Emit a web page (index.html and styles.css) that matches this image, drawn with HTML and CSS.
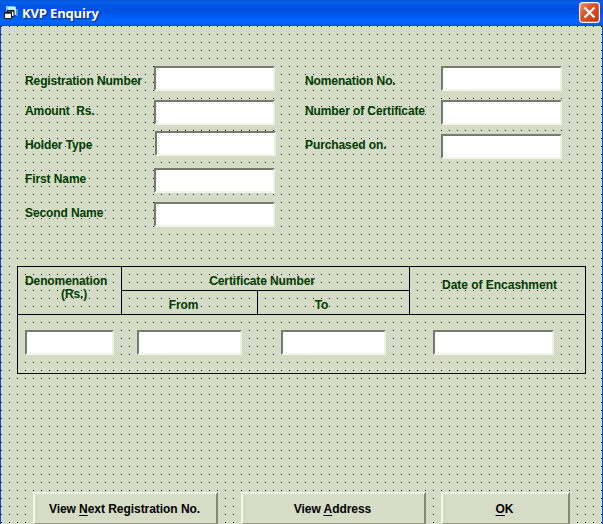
FILE: index.html
```html
<!DOCTYPE html>
<html lang="en">
<head>
<meta charset="utf-8">
<title>KVP Enquiry</title>
<link rel="stylesheet" href="styles.css">
</head>
<body>
<div class="window">
  <header class="titlebar">
    <svg class="app-icon" width="16" height="16" viewBox="0 0 16 16">
      <path d="M3 1h9v8H3z" fill="#83c8f2"/>
      <path d="M5 2h8v8H5z" fill="#c3ebff"/>
      <path d="M13 4h2v7h-2z" fill="#4c91d9"/>
      <path d="M4 5.500h7v6H4z" fill="#fff" stroke="#101820"/>
      <path d="M1.500 7.500h7v6h-7z" fill="#fff" stroke="#101820"/>
      <path d="M1 8h8M4 6h7" stroke="#101820" stroke-width="1.400"/>
    </svg>
    <h1 class="title">KVP Enquiry</h1>
    <button class="close" aria-label="Close">
      <svg width="21" height="21" viewBox="0 0 21 21">
        <defs><linearGradient id="red" x1="0" y1="0" x2="1" y2="1"><stop offset="0" stop-color="#ef9475"/><stop offset=".4" stop-color="#df522b"/><stop offset="1" stop-color="#be3510"/></linearGradient></defs>
        <rect x=".6" y=".6" width="19.8" height="19.8" rx="2.8" fill="url(#red)" stroke="#f3f3fb" stroke-width="1.2"/>
        <path d="M5.500 5.500l10 10M15.500 5.500l-10 10" stroke="#fff" stroke-width="2.2"/>
      </svg>
    </button>
  </header>
  <main class="form">
    <section class="fields">
      <div class="column">
        <div class="row first"><label>Registration Number</label><input class="wide"></div>
        <div class="row"><label>Amount &nbsp;Rs.</label><input class="wide"></div>
        <div class="row"><label>Holder Type</label><input class="wide raised"></div>
        <div class="row"><label>First Name</label><input class="wide"></div>
        <div class="row"><label>Second Name</label><input class="wide"></div>
      </div>
      <div class="column second">
        <div class="row first"><label>Nomenation No.</label><input class="wide"></div>
        <div class="row"><label>Number of Certificate</label><input class="wide"></div>
        <div class="row"><label>Purchased on.</label><input class="wide"></div>
      </div>
    </section>
    <section class="table">
      <div class="head">
        <div class="cell denom"><span>Denomenation</span><span class="rs">(Rs.)</span></div>
        <div class="cell cert"><span>Certificate Number</span></div>
        <div class="cell from"><span>From</span></div>
        <div class="cell to"><span>To</span></div>
        <div class="cell date"><span>Date of Encashment</span></div>
      </div>
      <div class="entry">
        <input class="in-denom"><input class="in-from"><input class="in-to"><input class="in-date">
      </div>
    </section>
    <footer class="actions">
      <button class="next"><span>View <u>N</u>ext Registration No.</span></button>
      <button class="address"><span>View <u>A</u>ddress</span></button>
      <button class="ok"><span><u>O</u>K</span></button>
    </footer>
  </main>
</div>
</body>
</html>
```
FILE: styles.css
```css
* { box-sizing: border-box; }
body { margin: 0; overflow: hidden; font: bold 12px/14px "Liberation Sans", Arial, sans-serif; letter-spacing: -.1px; }
.window { width: 603px; height: 524px; display: flex; flex-direction: column; background: #0848d8; }
.titlebar {
  height: 26px; flex: none; display: flex; align-items: center; padding: 0 3px;
  background: linear-gradient(#0a50cf 0, #0562ee 2px, #0054e3 5px, #0053e1 11px, #005cf4 17px, #0066ff 22px, #0262f4 24px, #0048d5 26px);
}
.app-icon { margin-top: -1px; }
.title { margin: 0 auto 0 3px; font: bold 13px/20px "Open Sans", sans-serif; letter-spacing: -.15px; color: #fff; text-shadow: 1px 1px 1px #0a2a80; }
.close { width: 21px; height: 21px; margin-top: -1px; padding: 0; border: 0; background: none; }
.close svg { display: block; }
/* design grid: one dot every 8px over a fine dither */
.form {
  flex: 1; margin: 0 1px; display: flex; flex-direction: column;
  background-image: conic-gradient(from 270deg at 1px 1px, #080c04 25%, transparent 0), conic-gradient(#d0d8c1 25%, #d9dfca 0 50%, #d0d8c1 0 75%, #d9dfca 0);
  background-size: 8px 8px, 2px 2px;
}
.fields { display: flex; height: 200px; padding: 40px 0 0 24px; color: #003c00; }
.column { width: 250px; display: flex; flex-direction: column; gap: 9px; }
.second { margin-left: 30px; width: 257px; }
.row { display: flex; flex: none; justify-content: space-between; height: 25px; }
.row label { margin-top: 4px; white-space: pre; }
.row.first label { margin-top: 8px; }
input { height: 25px; padding: 0; border: 2px solid; border-color: #76796d #eff1df #f4f6e8 #76796d; border-radius: 0; background: #fff; outline: 0; }
.wide { width: 121px; }
.raised { margin: -3px -1px 0 0; }
.table { width: 569px; height: 108px; margin: 40px 0 0 16px; border: 1px solid #000; color: #003c00; }
.head { display: grid; grid-template-columns: 104px 136px 152px 175px; grid-template-rows: 24px 23px; height: 48px; border-bottom: 1px solid #000; }
.cell { text-align: center; }
.denom { grid-row: 1 / 3; border-right: 1px solid #000; padding: 8px 6px 0 7px; text-align: left; display: flex; flex-direction: column; line-height: 13px; }
.rs { margin-left: 36px; }
.cert { grid-column: 2 / 4; border-bottom: 1px solid #000; border-right: 1px solid #000; padding: 7px 7px 0 0; }
.from { grid-column: 2; grid-row: 2; border-right: 1px solid #000; padding: 7px 12px 0 0; }
.to { grid-column: 3; grid-row: 2; border-right: 1px solid #000; padding: 7px 24px 0 0; }
.date { grid-column: 4; grid-row: 1 / 3; padding: 11px 0 0 4px; letter-spacing: -.03px; }
.entry { display: flex; padding: 15px 0 0 7px; }
.in-denom { width: 89px; }
.in-from { width: 105px; margin-left: 23px; }
.in-to { width: 105px; margin-left: 39px; }
.in-date { width: 121px; margin-left: 47px; }
.actions { display: flex; margin: 118px 0 0 32px; }
.actions button { height: 32px; padding: 0 2px 0 0; font: inherit; letter-spacing: -.05px; color: #000; background: #d7dcc6; border: 2px solid; border-color: #f6f8e9 #84886f #96997f #f6f8e9; border-bottom-width: 1px; border-radius: 0; }
.next { width: 185px; }
.address { width: 185px; margin-left: 23px; }
.ok { width: 129px; margin-left: 15px; }
u { text-underline-offset: 2px; }
```
